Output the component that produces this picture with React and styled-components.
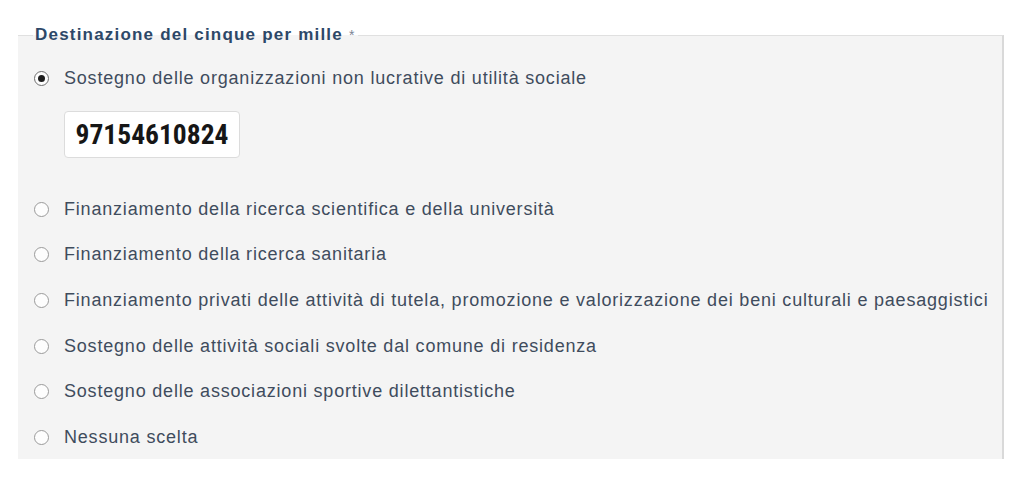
import styled, { createGlobalStyle } from "styled-components";

const Global = createGlobalStyle`
  html, body {
    margin: 0;
    padding: 0;
    background: #ffffff;
    font-family: "Liberation Sans", Arial, sans-serif;
  }
`;

const Page = styled.div`
  padding: 26px 20px 0 18px;
  width: 1024px;
  box-sizing: border-box;
`;

const Fieldset = styled.fieldset`
  margin: 0;
  padding: 12px 0 2px 16px;
  min-width: 0;
  background: #f4f4f4;
  border: none;
  border-top: 1px solid #e0e0e0;
  border-right: 2px solid #d9d9d9;
`;

const Legend = styled.legend`
  margin-left: -1px;
  padding: 0 2px;
  font-size: 17px;
  line-height: 18px;
  letter-spacing: 1.2px;
  font-weight: bold;
  color: #2d4868;
`;

const Star = styled.span`
  font-weight: normal;
  font-size: 14px;
  color: #7a8594;
  margin-left: 6px;
  vertical-align: top;
`;

const Options = styled.div`
  display: flex;
  flex-direction: column;
  margin-bottom: -3px;
`;

const Row = styled.label`
  display: flex;
  align-items: center;
  height: 45.6px;
  gap: 15px;
  font-size: 18px;
  letter-spacing: 0.8px;
  color: #3f4c5d;
  cursor: pointer;
`;

const Radio = styled.span`
  width: 15px;
  height: 15px;
  box-sizing: border-box;
  border-radius: 50%;
  border: 1.5px solid ${(p) => (p.checked ? "#6e6e6e" : "#9a9a9a")};
  background: #fdfdfd;
  display: flex;
  align-items: center;
  justify-content: center;
  flex-shrink: 0;

  &::after {
    content: "";
    width: 7px;
    height: 7px;
    border-radius: 50%;
    background: ${(p) => (p.checked ? "#1e1e1e" : "transparent")};
  }
`;

const CodeWrap = styled.div`
  padding: 9px 0 29px 30px;
`;

const CodeBox = styled.div`
  display: inline-flex;
  align-items: center;
  justify-content: center;
  width: 176px;
  height: 47px;
  box-sizing: border-box;
  background: #ffffff;
  border: 1px solid #dcdcdc;
  border-radius: 4px;
  font-family: "Roboto Condensed", Roboto, sans-serif;
  font-weight: bold;
  font-size: 27.5px;
  color: #161616;
`;

const options = [
  "Sostegno delle organizzazioni non lucrative di utilità sociale",
  "Finanziamento della ricerca scientifica e della università",
  "Finanziamento della ricerca sanitaria",
  "Finanziamento privati delle attività di tutela, promozione e valorizzazione dei beni culturali e paesaggistici",
  "Sostegno delle attività sociali svolte dal comune di residenza",
  "Sostegno delle associazioni sportive dilettantistiche",
  "Nessuna scelta",
];

export default function App() {
  return (
    <Page>
      <Global />
      <Fieldset>
        <Legend>
          Destinazione del cinque per mille<Star>*</Star>
        </Legend>
        <Options>
          {options.map((text, i) => (
            <div key={text}>
              <Row>
                <Radio checked={i === 0} />
                {text}
              </Row>
              {i === 0 && (
                <CodeWrap>
                  <CodeBox>97154610824</CodeBox>
                </CodeWrap>
              )}
            </div>
          ))}
        </Options>
      </Fieldset>
    </Page>
  );
}
